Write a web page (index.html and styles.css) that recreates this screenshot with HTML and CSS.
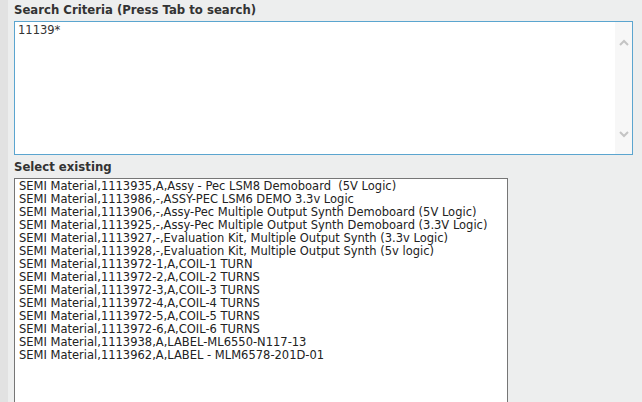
FILE: index.html
```html
<!DOCTYPE html>
<html>
<head>
<meta charset="utf-8">
<link rel="stylesheet" href="styles.css">
</head>
<body>
<div class="page">
  <div class="strip"></div>
  <div class="main">
    <label class="label" for="criteria">Search Criteria (Press Tab to search)</label>
    <div class="search-box">
      <textarea id="criteria" class="search-input">11139*</textarea>
      <div class="scrollbar">
        <svg width="10" height="7" viewBox="0 0 10 7"><path d="M1 6 L5 2 L9 6" fill="none" stroke="#c4c4c4" stroke-width="2"/></svg>
        <svg width="10" height="7" viewBox="0 0 10 7"><path d="M1 1 L5 5 L9 1" fill="none" stroke="#c4c4c4" stroke-width="2"/></svg>
      </div>
    </div>
    <div class="label label-second">Select existing</div>
    <div class="listbox">
      <div class="item">SEMI Material,1113935,A,Assy - Pec LSM8 Demoboard&nbsp; (5V Logic)</div>
      <div class="item">SEMI Material,1113986,-,ASSY-PEC LSM6 DEMO 3.3v Logic</div>
      <div class="item">SEMI Material,1113906,-,Assy-Pec Multiple Output Synth Demoboard (5V Logic)</div>
      <div class="item">SEMI Material,1113925,-,Assy-Pec Multiple Output Synth Demoboard (3.3V Logic)</div>
      <div class="item">SEMI Material,1113927,-,Evaluation Kit, Multiple Output Synth (3.3v Logic)</div>
      <div class="item">SEMI Material,1113928,-,Evaluation Kit, Multiple Output Synth (5v logic)</div>
      <div class="item">SEMI Material,1113972-1,A,COIL-1 TURN</div>
      <div class="item">SEMI Material,1113972-2,A,COIL-2 TURNS</div>
      <div class="item">SEMI Material,1113972-3,A,COIL-3 TURNS</div>
      <div class="item">SEMI Material,1113972-4,A,COIL-4 TURNS</div>
      <div class="item">SEMI Material,1113972-5,A,COIL-5 TURNS</div>
      <div class="item">SEMI Material,1113972-6,A,COIL-6 TURNS</div>
      <div class="item">SEMI Material,1113938,A,LABEL-ML6550-N117-13</div>
      <div class="item">SEMI Material,1113962,A,LABEL - MLM6578-201D-01</div>
    </div>
  </div>
</div>
</body>
</html>
```

FILE: styles.css
```css
html, body {
  margin: 0;
  padding: 0;
  background: #edeeee;
  height: 100%;
  overflow: hidden;
}
.page {
  display: flex;
  height: 100%;
  font-family: Verdana, "DejaVu Sans", sans-serif;
}
.strip {
  width: 8px;
  flex: 0 0 8px;
  background: #e2e2e2;
}
.main {
  flex: 1;
  padding: 2px 10px 0 6px;
  display: flex;
  flex-direction: column;
  align-items: flex-start;
}
.main > * {
  flex-shrink: 0;
}
.label {
  display: block;
  font-size: 11.7px;
  line-height: 16px;
  font-weight: bold;
  color: #333333;
}
.label-second {
  margin-top: 4px;
}
.search-box {
  margin-top: 3px;
  width: 617px;
  height: 132px;
  border: 1px solid #5ba5cf;
  background: #ffffff;
  display: flex;
}
.search-input {
  flex: 1;
  border: none;
  outline: none;
  resize: none;
  margin: 0;
  padding: 2px 3px;
  font-family: Verdana, "DejaVu Sans", sans-serif;
  font-size: 11.5px;
  line-height: 13px;
  color: #333333;
  background: transparent;
  overflow: hidden;
}
.scrollbar {
  width: 17px;
  background: #f7f7f7;
  display: flex;
  flex-direction: column;
  justify-content: space-between;
  align-items: center;
  padding: 17px 0 16px;
  box-sizing: border-box;
}
.listbox {
  margin-top: 3px;
  width: 484px;
  height: 240px;
  border: 1px solid #767676;
  background: #ffffff;
  padding: 1px 4px;
}
.item {
  font-size: 11.5px;
  line-height: 13px;
  color: #222222;
  white-space: nowrap;
}
```
